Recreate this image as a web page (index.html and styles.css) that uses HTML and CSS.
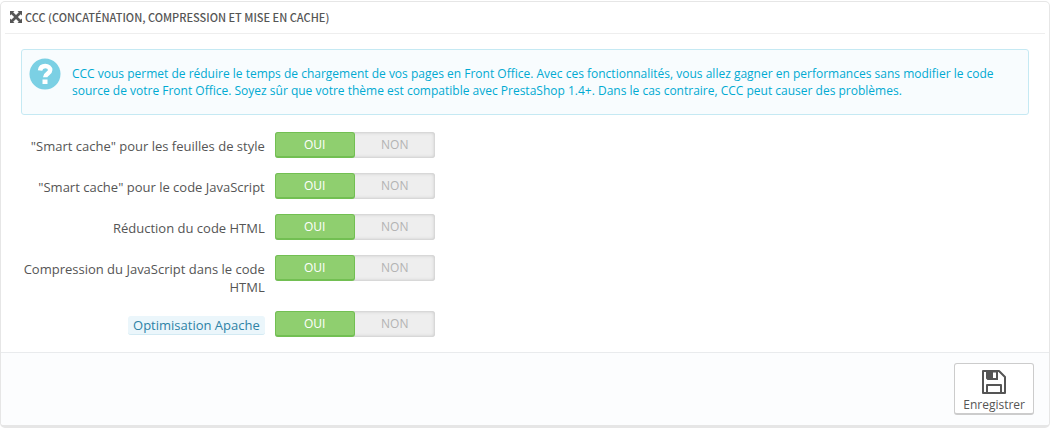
FILE: index.html
```html
<!DOCTYPE html>
<html lang="fr">
<head>
    <meta charset="UTF-8">
    <title>Performances</title>
    <link rel="stylesheet" href="styles.css">
</head>
<body>
    <form class="panel">
        <h3 class="panel-heading">
            <svg class="icon-fullscreen" viewBox="0 0 12 12" aria-hidden="true">
                <path d="M0 0h4.500L3.200 1.300 6 4.100l2.800-2.800L7.500 0H12v4.500l-1.300-1.300L7.900 6l2.800 2.800L12 7.500V12H7.500l1.300-1.300L6 7.900l-2.800 2.800L4.500 12H0V7.500l1.300 1.300L4.100 6 1.300 3.200 0 4.500z"/>
            </svg>
            CCC (Concaténation, compression et mise en cache)
        </h3>

        <div class="panel-body">
            <div class="alert">
                <svg class="icon-help" viewBox="0 0 32 32" aria-hidden="true">
                    <circle cx="16" cy="16" r="15.500" fill="#7bd0e4"/>
                    <path d="M11 12.500C11.500 9.500 13.300 8 16.200 8c3 0 5 1.700 5 4 0 3.700-5 3.600-5 7.300" fill="none" stroke="#fff" stroke-width="4.500"/>
                    <path d="M13.500 21.500h5v4.500h-5z" fill="#fff"/>
                </svg>
                <p>CCC vous permet de réduire le temps de chargement de vos pages en Front Office. Avec ces fonctionnalités, vous allez gagner en performances sans modifier le code source de votre Front Office. Soyez sûr que votre thème est compatible avec PrestaShop 1.4+. Dans le cas contraire, CCC peut causer des problèmes.</p>
            </div>

            <div class="form-group" role="radiogroup" aria-labelledby="css-label">
                <div class="control-label" id="css-label">"Smart cache" pour les feuilles de style</div>
                <div class="control">
                    <div class="switch">
                        <input type="radio" name="css" id="css_on" value="1" checked><label for="css_on">Oui</label>
                        <input type="radio" name="css" id="css_off" value="0"><label for="css_off">Non</label>
                    </div>
                </div>
            </div>

            <div class="form-group" role="radiogroup" aria-labelledby="js-label">
                <div class="control-label" id="js-label">"Smart cache" pour le code JavaScript</div>
                <div class="control">
                    <div class="switch">
                        <input type="radio" name="js" id="js_on" value="1" checked><label for="js_on">Oui</label>
                        <input type="radio" name="js" id="js_off" value="0"><label for="js_off">Non</label>
                    </div>
                </div>
            </div>

            <div class="form-group" role="radiogroup" aria-labelledby="html-label">
                <div class="control-label" id="html-label">Réduction du code HTML</div>
                <div class="control">
                    <div class="switch">
                        <input type="radio" name="html" id="html_on" value="1" checked><label for="html_on">Oui</label>
                        <input type="radio" name="html" id="html_off" value="0"><label for="html_off">Non</label>
                    </div>
                </div>
            </div>

            <div class="form-group" role="radiogroup" aria-labelledby="inline-label">
                <div class="control-label" id="inline-label">Compression du JavaScript dans le code HTML</div>
                <div class="control">
                    <div class="switch">
                        <input type="radio" name="inline" id="inline_on" value="1" checked><label for="inline_on">Oui</label>
                        <input type="radio" name="inline" id="inline_off" value="0"><label for="inline_off">Non</label>
                    </div>
                </div>
            </div>

            <div class="form-group" role="radiogroup" aria-labelledby="apache-label">
                <div class="control-label" id="apache-label"><span class="label-tooltip">Optimisation Apache</span></div>
                <div class="control">
                    <div class="switch">
                        <input type="radio" name="apache" id="apache_on" value="1" checked><label for="apache_on">Oui</label>
                        <input type="radio" name="apache" id="apache_off" value="0"><label for="apache_off">Non</label>
                    </div>
                </div>
            </div>
        </div>

        <div class="panel-footer">
            <button type="submit" class="btn-save">
                <svg class="icon-save" viewBox="0 0 24 24" aria-hidden="true">
                    <path d="M1 1h16l6 6v16H1zM5 23v-8h14v8" fill="none" stroke="#555" stroke-width="2" stroke-linejoin="round"/>
                    <path d="M4 1h12v9H5.500L4 8.500zM11 2.500V8h3V2.500z" fill="#555" fill-rule="evenodd"/>
                </svg>
                Enregistrer
            </button>
        </div>
    </form>
</body>
</html>
```

FILE: styles.css
```css
* {
    box-sizing: border-box;
}

body {
    margin: 1px 3px 0 0;
    font-family: "Open Sans", sans-serif;
    font-size: 13px;
    line-height: 18px;
    color: #555;
    background: #fff;
}

.panel {
    border: 1px solid #e6e6e6;
    border-bottom-width: 3px;
    border-radius: 5px;
    overflow: hidden;
}

.panel-heading {
    display: flex;
    align-items: center;
    gap: 3px;
    height: 32px;
    margin: 0 4px;
    padding: 0 5px 2px;
    border-bottom: 1px solid #eee;
    font-family: "Ubuntu Condensed", "Noto Sans CJK SC", sans-serif;
    font-size: 11px;
    font-weight: 500;
    text-transform: uppercase;
    white-space: nowrap;
}

.icon-fullscreen {
    width: 12px;
    height: 12px;
    fill: #555;
}

.panel-body {
    padding: 15px 20px 0;
}

.alert {
    display: flex;
    gap: 11px;
    min-height: 66px;
    margin-bottom: 17px;
    padding: 8px 30px 8px 7px;
    border: 1px solid #c5e9f3;
    border-radius: 3px;
    background: #f8fcfe;
    color: #00aad2;
    font-size: 12px;
    line-height: 17px;
}

.alert p {
    margin: 7px 0 0;
}

.icon-help {
    flex: none;
    width: 32px;
    height: 32px;
}

.form-group {
    display: grid;
    grid-template-columns: 1fr 3fr;
    margin: 0 -5px 15px -6px;
}

.control-label {
    padding: 5px 5px 0;
    text-align: right;
}

.label-tooltip {
    padding: 0 5px;
    border-bottom: 1px solid #d3eaf3;
    border-radius: 3px;
    background: #ebf6fb;
    color: #2e82a6;
}

.control {
    padding: 0 5px;
}

.switch {
    position: relative;
    display: flex;
    width: 160px;
    height: 26px;
    border-radius: 3px;
    background: #eee;
    box-shadow: inset 0 0 3px 1px #ccc;
}

.switch input {
    position: absolute;
    opacity: 0;
    margin: 0;
}

.switch label {
    flex: 1;
    border: 1px solid transparent;
    border-radius: 3px;
    color: #b3b3b3;
    font-size: 12px;
    line-height: 24px;
    text-align: center;
    text-transform: uppercase;
    cursor: pointer;
}

.switch input:checked + label {
    border-color: #72bf52;
    border-bottom-width: 2px;
    background: #8fcf6f;
    color: #fff;
}

.panel-footer {
    display: flex;
    justify-content: flex-end;
    padding: 10px 15px;
    border-top: 1px solid #e9ebed;
    background: #fcfdfe;
}

.btn-save {
    display: flex;
    flex-direction: column;
    align-items: center;
    gap: 2px;
    height: 52px;
    padding: 6px 8px 0;
    border: 1px solid #ccc;
    border-bottom-width: 2px;
    border-radius: 3px;
    background: #fff;
    color: #555;
    font-family: inherit;
    font-size: 12px;
    line-height: 17px;
    cursor: pointer;
}

.icon-save {
    flex: none;
    width: 24px;
    height: 24px;
}
```
